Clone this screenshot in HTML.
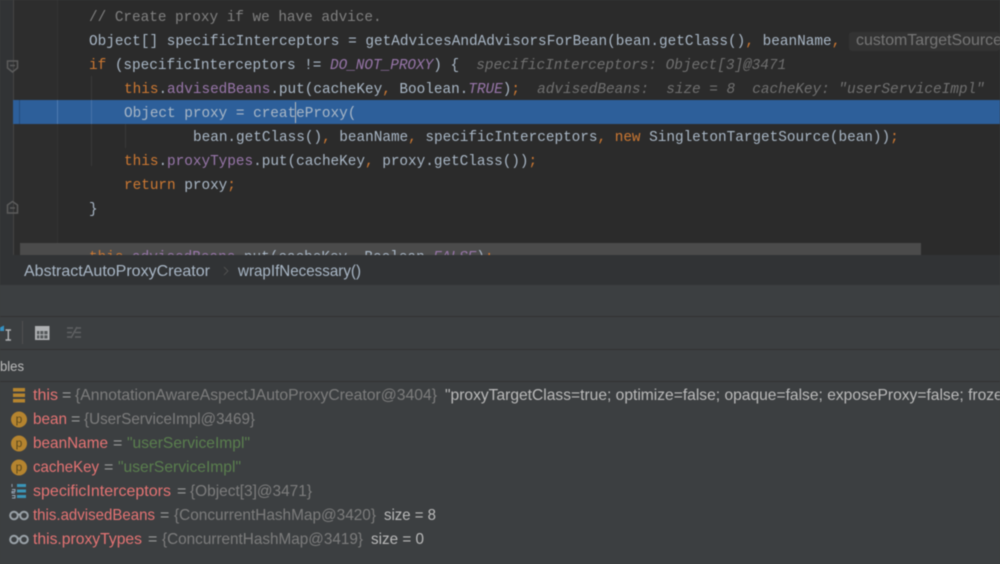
<!DOCTYPE html>
<html><head><meta charset="utf-8">
<style>
html,body{margin:0;padding:0;background:#3c3f41}
#r{position:relative;width:1000px;height:564px;overflow:hidden;background:#3c3f41;filter:blur(.45px)}
.a{position:absolute}
.c{position:absolute;white-space:pre;font:14.4px/24px "Liberation Mono",monospace;letter-spacing:-.03px;color:#a9b7c6;height:24px}
.k{color:#cc7832}.f{color:#9876aa}.i{font-style:italic}.h{color:#707070;font-style:italic}.cm{color:#808080}
svg text{font-family:"Liberation Sans",sans-serif;font-size:16px;white-space:pre}
.n{fill:#e57373}.g{fill:#7d7d7d}.t{fill:#5a7f4e}.w{fill:#bbbbbb}.e{fill:#9a9a9a}
</style></head><body>
<div id="r">
<div class="a" style="left:0;top:0;width:1000px;height:255px;background:#2b2b2b"></div>
<div class="a" style="left:0;top:0;width:13px;height:255px;background:#313335"></div>
<div class="a" style="left:13px;top:0;width:44px;height:255px;background:#2d2d2d"></div>
<div class="a" style="left:13px;top:0;width:1px;height:255px;background:#444"></div>
<div class="a" style="left:57px;top:0;width:1px;height:255px;background:#333"></div>
<div class="a" style="left:91px;top:76px;width:1px;height:90px;background:#383838"></div>
<div class="a" style="left:125px;top:124px;width:1px;height:24px;background:#383838"></div>

<div class="a" style="left:13px;top:100px;width:987px;height:24px;background:#2d5f9a"></div>
<div class="a" style="left:19px;top:100px;width:1px;height:24px;background:#244c7c"></div>
<div class="a" style="left:57px;top:100px;width:1px;height:24px;background:#4d7bb0"></div>
<div class="a" style="left:91px;top:100px;width:1px;height:24px;background:#4672a8"></div>

<svg class="a" style="left:0;top:51px" width="24" height="170" fill="none" stroke="#5c5c5c" stroke-width="1.500">
<path d="M7.500 10H17.500V17L12.500 21L7.500 17Z"/><path d="M10 14.500H15"/>
<path d="M7.500 162V154L12.500 150.500L17.500 154V162Z"/><path d="M10 157H15"/>
</svg>

<div class="c cm" style="left:89px;top:6px">// Create proxy if we have advice.</div>
<div class="c" style="left:89px;top:30px;letter-spacing:0">Object[] specificInterceptors = getAdvicesAndAdvisorsForBean(bean.getClass()<span class="k">,</span> beanName<span class="k">,</span></div>
<div class="a" style="left:849px;top:32px;width:151px;height:19px;background:#333333;border-radius:3px"></div>
<div class="c" style="left:89px;top:54px"><span class="k">if</span> (specificInterceptors != <span class="f i">DO_NOT_PROXY</span>) {  <span class="h">specificInterceptors: Object[3]@3471</span></div>
<div class="c" style="left:124px;top:78px"><span class="k">this</span>.<span class="f">advisedBeans</span>.put(cacheKey<span class="k">,</span> Boolean.<span class="f i">TRUE</span>)<span class="k">;</span>  <span class="h">advisedBeans:  size = 8  cacheKey: "userServiceImpl"</span></div>
<div class="c" style="left:124px;top:102px">Object proxy = createProxy(</div>
<div class="a" style="left:295px;top:102px;width:1px;height:21px;background:#bbbbbb"></div>
<div class="c" style="left:193px;top:126px">bean.getClass()<span class="k">,</span> beanName<span class="k">,</span> specificInterceptors<span class="k">,</span> <span class="k">new</span> SingletonTargetSource(bean))<span class="k">;</span></div>
<div class="c" style="left:124px;top:150px"><span class="k">this</span>.<span class="f">proxyTypes</span>.put(cacheKey<span class="k">,</span> proxy.getClass())<span class="k">;</span></div>
<div class="c" style="left:124px;top:174px"><span class="k">return</span> proxy<span class="k">;</span></div>
<div class="c" style="left:89px;top:198px">}</div>

<div class="a" style="left:20px;top:243px;width:901px;height:12px;background:#4b4b4b"></div>
<div class="c" style="left:89px;top:246px"><span class="k">this</span>.<span class="f">advisedBeans</span>.put(cacheKey<span class="k">,</span> Boolean.<span class="f i">FALSE</span>)<span class="k">;</span></div>

<div class="a" style="left:0;top:255px;width:1000px;height:30px;background:#313335"></div>
<svg class="a" style="left:222px;top:265px" width="8" height="12" fill="none" stroke="#505050" stroke-width="1"><path d="M2 2L6 6L2 10"/></svg>

<div class="a" style="left:0;top:316px;width:1000px;height:1px;background:#323232"></div>
<div class="a" style="left:0;top:349px;width:1000px;height:1px;background:#323232"></div>
<div class="a" style="left:0;top:381px;width:1000px;height:1px;background:#323232"></div>
<div class="a" style="left:22px;top:321px;width:1px;height:23px;background:#505050"></div>

<svg class="a" style="left:0;top:325px" width="90" height="22" fill="none">
<path d="M0 2.500L4 0.500V6H0Z" fill="#3592c4"/>
<path d="M5.500 5H11M8.300 5V15M5.500 15H11" stroke="#afb1b3" stroke-width="1.400"/>
<rect x="35" y="1" width="14.500" height="14" fill="#afb1b3"/>
<rect x="37" y="6" width="10.500" height="7.500" fill="#55585a"/>
<path d="M39.800 6V13.500M43.800 6V13.500M37 9.700H47.500" stroke="#afb1b3" stroke-width="1"/>
<path d="M67 3H73M76 3H81M67 7.500H72M75 7.500H81M67 12H72M75 12H81M71 13L77 2" stroke="#5f6163" stroke-width="1.500"/>
</svg>

<svg class="a" style="left:0;top:384px" width="32" height="168">
<path d="M13 4H25V7.500H13ZM13 9.500H25V13H13ZM13 15H25V18.500H13Z" fill="#b5842f"/>
<circle cx="19" cy="35.500" r="8" fill="#b5842f"/><circle cx="19" cy="59.500" r="8" fill="#b5842f"/><circle cx="19" cy="83.500" r="8" fill="#b5842f"/>
<path d="M17 100H26V103H17ZM17 105.500H26V108.500H17ZM17 111H26V114H17Z" fill="#3a95b8"/>
<path d="M12 100V103M12 105.500H15V107.500H12V109H15M12 111.500H15V114H12" stroke="#9ab" stroke-width=".9" fill="none"/>
<g fill="none" stroke="#9aa2a8" stroke-width="2">
<circle cx="14" cy="131.500" r="3.800"/><circle cx="24" cy="131.500" r="3.800"/><path d="M17.500 130.500H20.500"/>
<circle cx="14" cy="155.500" r="3.800"/><circle cx="24" cy="155.500" r="3.800"/><path d="M17.500 154.500H20.500"/>
</g>
</svg>
<div class="a" style="left:13px;top:410px;width:12px;text-align:center;font:12px/19px 'Liberation Sans',sans-serif;color:#5c4a1e">p</div>
<div class="a" style="left:13px;top:434px;width:12px;text-align:center;font:12px/19px 'Liberation Sans',sans-serif;color:#5c4a1e">p</div>
<div class="a" style="left:13px;top:458px;width:12px;text-align:center;font:12px/19px 'Liberation Sans',sans-serif;color:#5c4a1e">p</div>

<svg class="a" style="left:0;top:0" width="1000" height="564">
<text x="856" y="45" textLength="146" lengthAdjust="spacingAndGlyphs" fill="#767676">customTargetSource</text>
<text x="24" y="276" textLength="186" lengthAdjust="spacingAndGlyphs" fill="#a9b7c6">AbstractAutoProxyCreator</text>
<text x="238" y="276" textLength="123" lengthAdjust="spacingAndGlyphs" fill="#a9b7c6">wrapIfNecessary()</text>
<text x="0" y="371" style="font-size:14px" textLength="24" lengthAdjust="spacingAndGlyphs" fill="#bbbbbb">bles</text>

<text class="n" x="33" y="400" textLength="25" lengthAdjust="spacingAndGlyphs">this</text>
<text class="e" x="62" y="400">=</text>
<text class="g" x="75" y="400" textLength="362" lengthAdjust="spacingAndGlyphs">{AnnotationAwareAspectJAutoProxyCreator@3404}</text>
<text class="w" x="445" y="400" textLength="614" lengthAdjust="spacingAndGlyphs">"proxyTargetClass=true; optimize=false; opaque=false; exposeProxy=false; frozen=false"</text>

<text class="n" x="33" y="424" textLength="34" lengthAdjust="spacingAndGlyphs">bean</text>
<text class="e" x="71" y="424">=</text>
<text class="g" x="84" y="424" textLength="171" lengthAdjust="spacingAndGlyphs">{UserServiceImpl@3469}</text>

<text class="n" x="33" y="448" textLength="75" lengthAdjust="spacingAndGlyphs">beanName</text>
<text class="e" x="113" y="448">=</text>
<text class="t" x="127" y="448" textLength="123" lengthAdjust="spacingAndGlyphs">"userServiceImpl"</text>

<text class="n" x="33" y="472" textLength="66" lengthAdjust="spacingAndGlyphs">cacheKey</text>
<text class="e" x="104" y="472">=</text>
<text class="t" x="118" y="472" textLength="123" lengthAdjust="spacingAndGlyphs">"userServiceImpl"</text>

<text class="n" x="33" y="496" textLength="138" lengthAdjust="spacingAndGlyphs">specificInterceptors</text>
<text class="e" x="177" y="496">=</text>
<text class="g" x="190" y="496" textLength="122" lengthAdjust="spacingAndGlyphs">{Object[3]@3471}</text>

<text class="n" x="33" y="520" textLength="122" lengthAdjust="spacingAndGlyphs">this.advisedBeans</text>
<text class="e" x="160" y="520">=</text>
<text class="g" x="174" y="520" textLength="202" lengthAdjust="spacingAndGlyphs">{ConcurrentHashMap@3420}</text>
<text class="w" x="384" y="520" textLength="52" lengthAdjust="spacingAndGlyphs">size = 8</text>

<text class="n" x="33" y="544" textLength="109" lengthAdjust="spacingAndGlyphs">this.proxyTypes</text>
<text class="e" x="148" y="544">=</text>
<text class="g" x="162" y="544" textLength="201" lengthAdjust="spacingAndGlyphs">{ConcurrentHashMap@3419}</text>
<text class="w" x="371" y="544" textLength="53" lengthAdjust="spacingAndGlyphs">size = 0</text>
</svg>
</div>
</body></html>
